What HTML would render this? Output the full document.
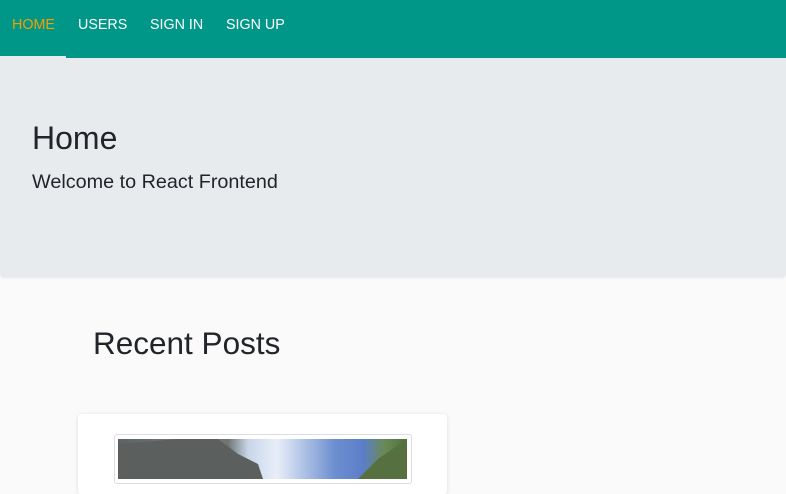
<!DOCTYPE html>
<html><head><style>
*{margin:0;padding:0;box-sizing:border-box}
body{width:786px;height:468px;overflow:hidden;background:#fafafa;font-family:"Liberation Sans",sans-serif;position:relative}
.nav{position:absolute;left:0;top:0;width:786px;height:58px;background:#009688}
.nav span{position:absolute;top:17px;font-size:14.3px;color:#fff}
.ind{position:absolute;left:0;top:56px;width:66px;height:3px;background:#e9ecef}
.jumbo{position:absolute;left:0;top:58px;width:786px;height:219px;background:#e8ebee;border-radius:0 0 4px 4px;box-shadow:0 1px 2px rgba(0,0,0,.08)}
h1{position:absolute;left:32px;top:120px;font-size:32px;font-weight:400;color:#212529}
.sub{position:absolute;left:32px;top:171px;font-size:19.8px;color:#212529}
h2{position:absolute;left:93px;top:325px;font-size:31.5px;font-weight:400;color:#212529}
.card{position:absolute;left:78px;top:414px;width:369px;height:80px;background:#fff;border-radius:3px;box-shadow:0 1px 4px rgba(0,0,0,.12)}
.frame{position:absolute;left:114px;top:434px;width:298px;height:50px;border:1px solid #dcdce6;border-radius:3px;background:#fff}
.img{position:absolute;left:118px;top:439px;width:289px;height:40px;background:linear-gradient(90deg,#5a6460 0%,#777b80 25%,#6d7570 38%,#c8d6ea 45%,#e8eef8 55%,#6d8fd0 75%,#5b7ec8 85%,#6a8a55 92%,#50703f 100%)}
</style></head><body>
<div class="nav">
<span style="left:12px;color:#f5a000">HOME</span>
<span style="left:78px">USERS</span>
<span style="left:150px">SIGN IN</span>
<span style="left:226px">SIGN UP</span>
</div>
<div class="jumbo"></div>
<div class="ind"></div>
<h1>Home</h1>
<div class="sub">Welcome to React Frontend</div>
<h2>Recent Posts</h2>
<div class="card"></div>
<div class="frame"></div>
<div class="img"><svg width="289" height="40"><polygon points="0,5 60,0 100,0 120,15 140,25 145,40 0,40" fill="#5b605e"/><polygon points="240,40 260,20 289,0 289,40" fill="#56703f"/></svg></div>
</body></html>
